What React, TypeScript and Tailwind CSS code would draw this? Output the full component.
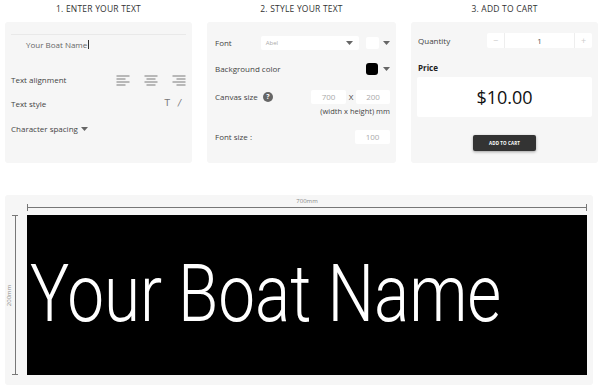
import React from 'react';

const ui = { fontFamily: '"Open Sans", "Liberation Sans", sans-serif' };

function AlignIcon({ side }: { side: 'left' | 'center' | 'right' }) {
  return (
    <svg width="14" height="11" viewBox="0 0 14 11">
      {[0, 1, 2, 3].map((i) => {
        const w = i % 2 === 0 ? 13 : 9;
        const x = side === 'left' ? 0.5 : side === 'right' ? 13.5 - w : (14 - w) / 2;
        return <line key={i} x1={x} x2={x + w} y1={1 + i * 3} y2={1 + i * 3} stroke="#7a7a7a" strokeWidth="1" />;
      })}
    </svg>
  );
}

function Caret() {
  return (
    <svg width="7" height="4" viewBox="0 0 7 4">
      <path d="M0 0 L7 0 L3.5 4 Z" fill="#666" />
    </svg>
  );
}

function Title({ children }: { children: React.ReactNode }) {
  return <div className="h-[22px] pb-[3px] flex items-center justify-center text-[8.5px] text-[#333] tracking-[0.2px]">{children}</div>;
}

function EnterText() {
  return (
    <div>
      <Title>1. ENTER YOUR TEXT</Title>
      <div className="bg-[#f6f6f6] rounded-[3px] h-[141px] px-[6px] pt-[12px]">
        <div className="border-t border-[#e9e9e9] h-[20px] flex items-center pl-[15px] text-[8px] text-[#666]">
          Your Boat Name<span className="w-px h-[9px] bg-[#333] ml-px" />
        </div>
        <div className="flex items-center justify-between mt-[20px] h-[12px]">
          <span className="text-[8px] text-[#444]">Text alignment</span>
          <div className="flex items-center gap-[14px]">
            <AlignIcon side="left" />
            <AlignIcon side="center" />
            <AlignIcon side="right" />
          </div>
        </div>
        <div className="flex items-center justify-between mt-[12px] h-[12px]">
          <span className="text-[8px] text-[#444]">Text style</span>
          <div className="flex items-center gap-[8px] pr-[5px] text-[9px] text-[#777]" style={{ fontFamily: '"DejaVu Sans", sans-serif' }}>
            <span>T</span>
            <span className="italic">/</span>
          </div>
        </div>
        <div className="flex items-center mt-[13px] h-[12px] gap-[3px]">
          <span className="text-[8px] text-[#444]">Character spacing</span>
          <Caret />
        </div>
      </div>
    </div>
  );
}

function StyleText() {
  return (
    <div>
      <Title>2. STYLE YOUR TEXT</Title>
      <div className="bg-[#f6f6f6] rounded-[3px] h-[141px] pl-[8px] pr-[6px] pt-[14px] text-[8px] text-[#444]">
        <div className="flex items-center h-[14px]">
          <span className="w-[46px]">Font</span>
          <div className="w-[99px] h-[14px] bg-white rounded-[2px] flex items-center justify-between pl-[5px] pr-[6px]">
            <span className="text-[6px] text-[#aaa]">Abel</span>
            <Caret />
          </div>
          <div className="ml-[7px] w-[13px] h-[12px] bg-white rounded-[2px]" />
          <div className="ml-[4px]"><Caret /></div>
        </div>
        <div className="flex items-center h-[14px] mt-[12px]">
          <span className="flex-1">Background color</span>
          <div className="w-[12px] h-[12px] bg-black rounded-[3px]" />
          <div className="ml-[5px]"><Caret /></div>
        </div>
        <div className="flex justify-between mt-[14px]">
          <div className="flex items-center gap-[5px] h-[14px]">
            <span>Canvas size</span>
            <span className="w-[10px] h-[10px] rounded-full bg-[#666] text-white text-[7px] font-bold flex items-center justify-center">?</span>
          </div>
          <div className="flex flex-col items-end">
            <div className="flex items-center h-[14px] text-[8px] text-[#aaa]">
              <div className="w-[35px] h-[14px] bg-white rounded-[2px] flex items-center justify-center">700</div>
              <span className="w-[10px] text-center text-[#444]">X</span>
              <div className="w-[34px] h-[14px] bg-white rounded-[2px] flex items-center justify-center">200</div>
            </div>
            <span className="mt-[2px] text-[7.5px]">(width x height) mm</span>
          </div>
        </div>
        <div className="flex items-center justify-between h-[14px] mt-[13px]">
          <span>Font size :</span>
          <div className="w-[35px] h-[14px] bg-white rounded-[2px] flex items-center justify-center text-[#aaa]">100</div>
        </div>
      </div>
    </div>
  );
}

function AddToCart() {
  return (
    <div>
      <Title>3. ADD TO CART</Title>
      <div className="bg-[#f6f6f6] rounded-[3px] h-[141px] px-[6px] pt-[11px] text-[8px] text-[#444]">
        <div className="flex items-center justify-between h-[15px]">
          <span className="pl-px">Quantity</span>
          <div className="flex h-[15px] w-[105px] bg-white rounded-[2px]">
            <div className="w-[18px] flex items-center justify-center border-r border-[#eee] text-[9px] text-[#ccc]">−</div>
            <div className="flex-1 flex items-center justify-center text-[8px] text-[#555]">1</div>
            <div className="w-[18px] flex items-center justify-center border-l border-[#eee] text-[9px] text-[#ccc]">+</div>
          </div>
        </div>
        <div className="mt-[14px] font-bold text-[8px] text-[#222] pl-px">Price</div>
        <div className="mt-[3px] h-[40px] bg-white rounded-[2px] flex items-center justify-center text-[18px] text-[#111]">$10.00</div>
        <div className="flex justify-center mt-[18px]">
          <div className="w-[63px] h-[16px] bg-[#333] rounded-[2px] shadow-[0_1px_3px_rgba(0,0,0,0.35)] flex items-center justify-center text-[4.5px] font-bold text-white tracking-[0.1px]">
            ADD TO CART
          </div>
        </div>
      </div>
    </div>
  );
}

function Preview() {
  return (
    <div className="ml-[5px] mr-[7px] mt-[32px] h-[190px] bg-[#f6f6f6] rounded-[3px] grid grid-cols-[22px_560px] grid-rows-[20px_160px]">
      <div />
      <div className="relative">
        <span className="absolute left-0 right-0 top-[2px] text-center text-[6px] text-[#888]">700mm</span>
        <div className="absolute left-0 right-0 top-[12px] h-px bg-[#777]" />
        <div className="absolute left-0 top-[9px] w-px h-[7px] bg-[#777]" />
        <div className="absolute right-0 top-[9px] w-px h-[7px] bg-[#777]" />
      </div>
      <div className="relative">
        <div className="absolute left-[9.5px] top-0 bottom-0 w-px bg-[#777]" />
        <div className="absolute left-[7px] top-0 w-[6px] h-px bg-[#777]" />
        <div className="absolute left-[7px] bottom-0 w-[6px] h-px bg-[#777]" />
        <span className="absolute left-[-11px] top-[76px] w-[30px] text-center text-[6px] text-[#888] -rotate-90">200mm</span>
      </div>
      <div className="bg-black flex items-center overflow-hidden">
        <span
          className="text-white text-[80px] font-light leading-none ml-[3px] -mt-[2px] whitespace-nowrap origin-left scale-x-[0.82]"
          style={{ fontFamily: 'Roboto, "Liberation Sans", sans-serif' }}
        >
          Your Boat Name
        </span>
      </div>
    </div>
  );
}

export default function App() {
  return (
    <div className="w-[600px] h-[386px] bg-white overflow-hidden" style={ui}>
      <div className="grid grid-cols-[187px_189px_187px] gap-x-[15px] pl-[5px]">
        <EnterText />
        <StyleText />
        <AddToCart />
      </div>
      <Preview />
    </div>
  );
}
